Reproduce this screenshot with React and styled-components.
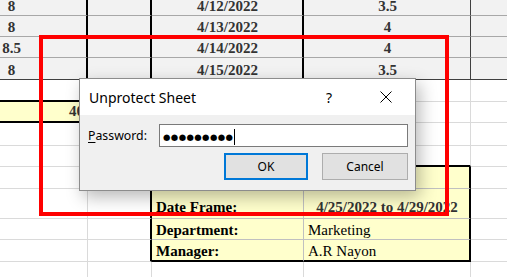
import React from 'react';
import styled, { createGlobalStyle } from 'styled-components';

const GlobalStyle = createGlobalStyle`
  html, body {
    margin: 0;
    padding: 0;
    background: #fff;
    overflow: hidden;
  }
`;

const Stage = styled.div`
  position: relative;
  width: 507px;
  height: 277px;
  overflow: hidden;
  background: #fff;
`;

const Sheet = styled.div`
  display: grid;
  grid-template-columns: 88px 64px 152px 167px 64px;
  grid-template-rows: 16px 21px 21px 22px 22px 21px 23px 21px 22px 30px 21px 22px 22px;
  font-family: "Liberation Serif", "Times New Roman", serif;
  font-size: 15px;
`;

const Cell = styled.div`
  box-sizing: border-box;
  display: flex;
  align-items: flex-end;
  justify-content: ${p => p.$align || 'flex-start'};
  padding: 0 3px ${p => p.$pb ?? 0}px 4px;
  background: ${p => p.$fill || '#fff'};
  border-right: ${p => p.$r || '1px solid #dadada'};
  border-bottom: ${p => p.$b || '1px solid #dadada'};
  font-weight: ${p => (p.$bold ? 700 : 400)};
  color: ${p => p.$ink || '#000'};
  white-space: nowrap;
  overflow: hidden;
  line-height: 17px;
`;

// column A is scrolled partly off screen, so its centred text sits near the left edge
const ClippedCell = styled(Cell)`
  padding-left: 0;
  padding-right: 63px;
`;

const Highlight = styled.div`
  position: absolute;
  left: 39px;
  top: 35px;
  width: 410px;
  height: 181px;
  box-sizing: border-box;
  border: 4px solid #ff0000;
  pointer-events: none;
`;

const Dialog = styled.div`
  position: absolute;
  left: 79px;
  top: 78px;
  width: 337px;
  height: 113px;
  box-sizing: border-box;
  border: 1px solid #8c8c8c;
  background: #f0f0f0;
  box-shadow: 4px 6px 16px rgba(0, 0, 0, 0.28);
  font-family: "Noto Sans", "Open Sans", sans-serif;
  display: flex;
  flex-direction: column;
`;

const TitleBar = styled.div`
  height: 36px;
  background: #fff;
  display: flex;
  align-items: center;
  padding: 0 23px 0 9px;
`;

const Title = styled.span`
  font-size: 14px;
  color: #000;
  flex: 1;
`;

const Help = styled.span`
  font-size: 14px;
  color: #000;
  margin-right: 48px;
`;

const Body = styled.div`
  flex: 1;
  display: flex;
  flex-direction: column;
  padding: 9px 7px 0 8px;
`;

const FieldRow = styled.div`
  display: flex;
  align-items: center;
`;

const Label = styled.label`
  width: 71px;
  font-size: 12.3px;
  color: #000;
  u {
    text-decoration-thickness: 1px;
    text-underline-offset: 2px;
  }
`;

const Input = styled.div`
  flex: 1;
  height: 23px;
  box-sizing: border-box;
  border: 1px solid #7a7a7a;
  background: #fff;
  display: flex;
  align-items: center;
  padding: 2px 0 0 3px;
`;

const Dots = styled.span`
  font-family: "DejaVu Sans", sans-serif;
  font-size: 8.5px;
  letter-spacing: 0.4px;
  color: #000;
`;

const Caret = styled.span`
  width: 1px;
  height: 16px;
  background: #000;
  margin-left: 1px;
`;

const ButtonRow = styled.div`
  display: flex;
  justify-content: flex-end;
  gap: 14px;
  margin-top: 6px;
`;

const Button = styled.button`
  box-sizing: border-box;
  width: ${p => p.$w}px;
  height: 27px;
  padding: 0;
  background: #e1e1e1;
  border: ${p => (p.$primary ? '2px solid #0078d7' : '1px solid #adadad')};
  font-family: "Noto Sans", "Open Sans", sans-serif;
  font-size: 12px;
  color: #000;
`;

const CloseIcon = () => (
  <svg width="12" height="12" viewBox="0 0 12 12">
    <path d="M0.5 0.5 L11.5 11.5 M11.5 0.5 L0.5 11.5" stroke="#000" strokeWidth="1" fill="none" />
  </svg>
);

const grey = '#f2f2f2';
const hLine = '1px solid #a8a8a8';
const black2 = '2px solid #000';
const yellow = '#ffffcc';
const inner = '1px solid #c0c0c0';

const topRows = [
  ['8', '4/12/2022', '3.5'],
  ['8', '4/13/2022', '4'],
  ['8.5', '4/14/2022', '4'],
  ['8', '4/15/2022', '3.5'],
];

const info = [
  ['Date Frame:', '4/25/2022 to 4/29/2022', true],
  ['Department:', 'Marketing', false],
  ['Manager:', 'A.R Nayon', false],
];

const App = () => {
  return (
    <Stage>
      <GlobalStyle />
      <Sheet>
        {topRows.map(([hours, date, rate], i) => {
          const b = i === 3 ? '1px solid #404040' : hLine;
          return (
            <React.Fragment key={date}>
              <ClippedCell $fill={grey} $b={b} $r={black2} $align="center" $bold $ink="#333">{hours}</ClippedCell>
              <Cell $fill={grey} $b={b} $r={black2} />
              <Cell $fill={grey} $b={b} $r={black2} $align="center" $bold $ink="#333">{date}</Cell>
              <Cell $fill={grey} $b={b} $r="1px solid #404040" $align="center" $bold $ink="#333">{rate}</Cell>
              <Cell $fill={grey} $b={b} />
            </React.Fragment>
          );
        })}

        <Cell $b={black2} />
        <Cell $b={black2} />
        <Cell />
        <Cell />
        <Cell />

        <Cell $fill={yellow} $b={black2} $align="flex-end" $bold $ink="#333" $pb={1}>40</Cell>
        <Cell $fill={yellow} $b={black2} />
        <Cell />
        <Cell />
        <Cell />

        {[0, 1].map(k => (
          <React.Fragment key={k}>
            <Cell />
            <Cell />
            <Cell $b={k === 1 ? black2 : undefined} />
            <Cell $b={k === 1 ? black2 : undefined} />
            <Cell />
          </React.Fragment>
        ))}

        <Cell />
        <Cell $r={black2} />
        <Cell $fill={yellow} $r={inner} $b={inner} />
        <Cell $fill={yellow} $r={black2} $b={inner} />
        <Cell />

        {info.map(([label, value, strong], i) => (
          <React.Fragment key={label}>
            <Cell />
            <Cell $r={black2} />
            <Cell $fill={yellow} $r={inner} $b={i === 2 ? black2 : inner} $bold $pb={strong ? 2 : 0}>{label}</Cell>
            <Cell
              $fill={yellow}
              $r={black2}
              $b={i === 2 ? black2 : inner}
              $align={strong ? 'center' : 'flex-start'}
              $bold={strong}
              $ink={strong ? '#333' : '#000'}
              $pb={strong ? 2 : 0}
            >
              {value}
            </Cell>
            <Cell />
          </React.Fragment>
        ))}

        <Cell />
        <Cell />
        <Cell />
        <Cell />
        <Cell />
      </Sheet>

      <Highlight />

      <Dialog>
        <TitleBar>
          <Title>Unprotect Sheet</Title>
          <Help>?</Help>
          <CloseIcon />
        </TitleBar>
        <Body>
          <FieldRow>
            <Label><u>P</u>assword:</Label>
            <Input>
              <Dots>●●●●●●●●●</Dots>
              <Caret />
            </Input>
          </FieldRow>
          <ButtonRow>
            <Button $w={84} $primary>OK</Button>
            <Button $w={86}>Cancel</Button>
          </ButtonRow>
        </Body>
      </Dialog>
    </Stage>
  );
};

export default App;
